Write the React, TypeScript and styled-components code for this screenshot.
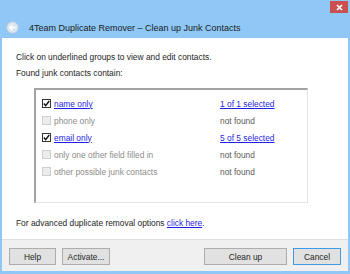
import { createGlobalStyle } from 'styled-components';
import styled from 'styled-components';

const Global = createGlobalStyle`
  html, body {
    margin: 0;
    padding: 0;
    background: #8fc8f7;
  }
  body {
    font-family: "Liberation Sans", Arial, sans-serif;
  }
`;

type Row = {
  label: string;
  checked: boolean;
  result: string;
  found: boolean;
};

const rows: Row[] = [
  { label: 'name only', checked: true, result: '1 of 1 selected', found: true },
  { label: 'phone only', checked: false, result: 'not found', found: false },
  { label: 'email only', checked: true, result: '5 of 5 selected', found: true },
  { label: 'only one other field filled in', checked: false, result: 'not found', found: false },
  { label: 'other possible junk contacts', checked: false, result: 'not found', found: false },
];

const App = () => {
  return (
    <>
      <Global />
      <SWindow>
        <STitleBar>
          <STopRow>
            <SClose>
              <svg width="7" height="7" viewBox="0 0 7 7">
                <path d="M1 1 L6 6 M6 1 L1 6" stroke="#fff" strokeWidth="1.6" />
              </svg>
            </SClose>
          </STopRow>
          <SCaption>
            <SBack>
              <svg width="13" height="13" viewBox="0 0 13 13">
                <circle cx="6.5" cy="6.5" r="5.8" fill="#d9e6f2" stroke="#b8c8d8" strokeWidth="0.8" />
                <path d="M9.5 6.5 H4 M6.3 4 L3.8 6.5 L6.3 9" fill="none" stroke="#ffffff" strokeWidth="1.4" />
              </svg>
            </SBack>
            <STitle>4Team Duplicate Remover – Clean up Junk Contacts</STitle>
          </SCaption>
        </STitleBar>

        <SContent>
          <SText>Click on underlined groups to view and edit contacts.</SText>
          <SText>Found junk contacts contain:</SText>
          <SBox>
            {rows.map((r) => (
              <SRow key={r.label}>
                <SLeft>
                  <SCheck $on={r.checked}>
                    {r.checked && (
                      <svg width="7" height="7" viewBox="0 0 7 7">
                        <path d="M0.8 3.6 L2.7 5.6 L6.2 1" fill="none" stroke="#111" strokeWidth="1.4" />
                      </svg>
                    )}
                  </SCheck>
                  <SLabel $on={r.checked}>{r.label}</SLabel>
                </SLeft>
                <SResult $link={r.found}>{r.result}</SResult>
              </SRow>
            ))}
          </SBox>
          <SFootText>
            For advanced duplicate removal options <SLink>click here</SLink>.
          </SFootText>
        </SContent>

        <SFooter>
          <SButton $w={47}>Help</SButton>
          <SButton $w={48}>Activate...</SButton>
          <SSpacer />
          <SButton $w={83}>Clean up</SButton>
          <SButton $w={48} $focus>Cancel</SButton>
        </SFooter>
      </SWindow>
    </>
  );
};

export default App;

const SWindow = styled.div`
  width: 350px;
  height: 274px;
  box-sizing: border-box;
  padding: 0 2px 3px 2px;
  display: flex;
  flex-direction: column;
  background: #8fc8f7;
  overflow: hidden;
`;

const STitleBar = styled.div`
  height: 38px;
  display: flex;
  flex-direction: column;
`;

const STopRow = styled.div`
  display: flex;
  justify-content: flex-end;
  padding: 1px 0 0 0;
  height: 13px;
`;

const SClose = styled.div`
  width: 18px;
  height: 12px;
  background: #c9504f;
  display: flex;
  align-items: center;
  justify-content: center;
`;

const SCaption = styled.div`
  display: flex;
  align-items: center;
  gap: 10px;
  padding: 7px 0 0 4px;
`;

const SBack = styled.div`
  width: 13px;
  height: 13px;
  display: flex;
`;

const STitle = styled.div`
  font-size: 9px;
  color: #1a1a1a;
`;

const SContent = styled.div`
  flex: 1;
  background: #ffffff;
  padding: 13px 0 0 14px;
  display: flex;
  flex-direction: column;
`;

const SText = styled.div`
  font-size: 8.4px;
  color: #1e1e1e;
  line-height: 12px;
  margin-bottom: 4px;
`;

const SBox = styled.div`
  margin: 5px 0 0 18px;
  width: 274px;
  height: 115px;
  box-sizing: border-box;
  border-top: 2px solid #a3a3a3;
  border-left: 2px solid #a3a3a3;
  border-right: 1px solid #e3e3e3;
  border-bottom: 1px solid #e3e3e3;
  padding: 5px 0 0 6px;
  display: flex;
  flex-direction: column;
`;

const SRow = styled.div`
  display: grid;
  grid-template-columns: 178px 1fr;
  align-items: center;
  height: 17px;
`;

const SLeft = styled.div`
  display: flex;
  align-items: center;
  gap: 3px;
`;

const SCheck = styled.div<{ $on: boolean }>`
  width: 9px;
  height: 9px;
  box-sizing: border-box;
  border: 1px solid ${(p) => (p.$on ? '#333' : '#cfcfcf')};
  background: ${(p) => (p.$on ? '#fff' : '#ececec')};
  display: flex;
  align-items: center;
  justify-content: center;
`;

const SLabel = styled.span<{ $on: boolean }>`
  font-size: 8.4px;
  color: ${(p) => (p.$on ? '#1f1fe6' : '#8c8c8c')};
  text-decoration: ${(p) => (p.$on ? 'underline' : 'none')};
`;

const SResult = styled.span<{ $link: boolean }>`
  font-size: 8.4px;
  color: ${(p) => (p.$link ? '#1f1fe6' : '#5a5a5a')};
  text-decoration: ${(p) => (p.$link ? 'underline' : 'none')};
`;

const SFootText = styled.div`
  font-size: 8.4px;
  line-height: 12px;
  color: #1e1e1e;
  margin-top: 14px;
`;

const SLink = styled.span`
  color: #1f1fe6;
  text-decoration: underline;
`;

const SFooter = styled.div`
  height: 32px;
  box-sizing: border-box;
  background: #f0f0f0;
  border-top: 1px solid #dfdfdf;
  display: flex;
  align-items: flex-start;
  gap: 6px;
  padding: 8px 7px 0 7px;
`;

const SSpacer = styled.div`
  flex: 1;
`;

const SButton = styled.button<{ $w: number; $focus?: boolean }>`
  width: ${(p) => p.$w}px;
  height: 17px;
  box-sizing: border-box;
  padding: 0;
  font-family: inherit;
  font-size: 8.4px;
  color: #1e1e1e;
  background: #e1e1e1;
  border: 1px solid ${(p) => (p.$focus ? '#3c9ae6' : '#adadad')};
`;
